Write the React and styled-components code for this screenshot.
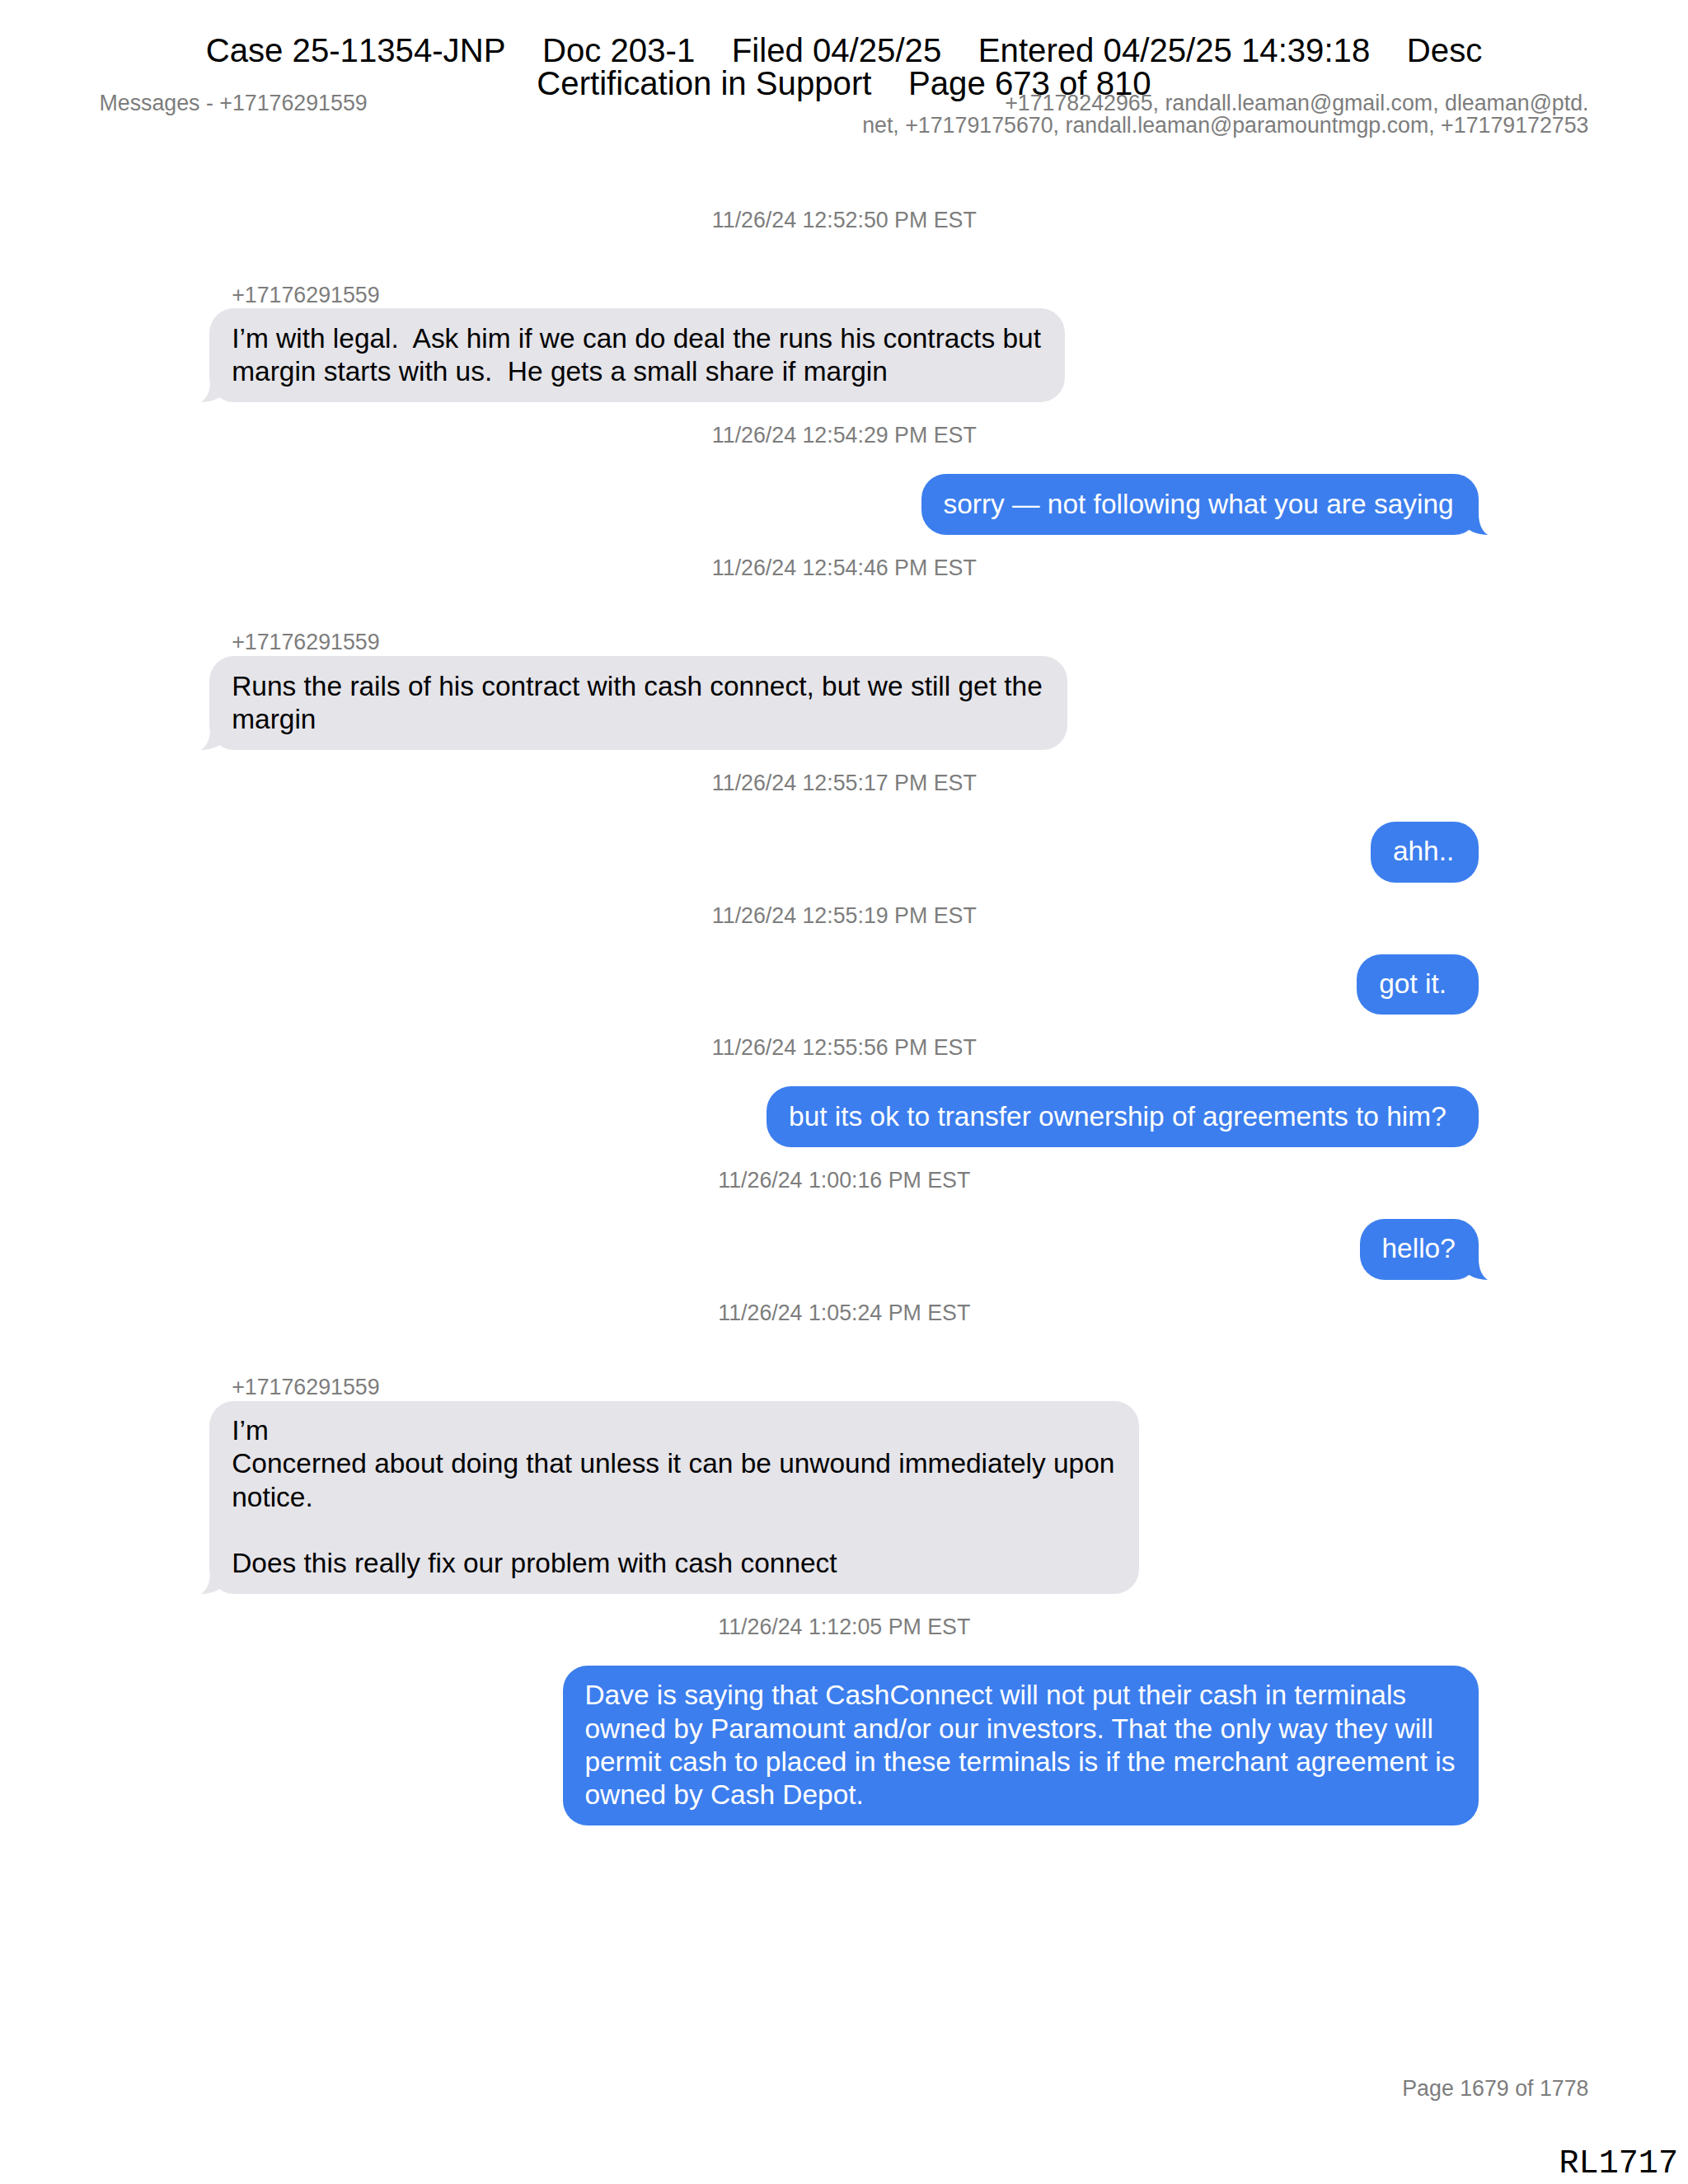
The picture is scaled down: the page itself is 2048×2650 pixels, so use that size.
import React from 'react';
import styled, { createGlobalStyle } from 'styled-components';

/* Pixels per typographic point on a 612pt-wide letter page. */
const PT = 2048 / 612;

const GlobalStyle = createGlobalStyle`
  body {
    margin: 0;
    background: #fff;
    font-family: "Liberation Sans", Arial, sans-serif;
  }
`;

const Page = styled.main`
  box-sizing: border-box;
  position: relative;
  display: flex;
  flex-direction: column;
  width: 2048px;
  height: 2650px;
  padding-top: 112px;
  overflow: hidden;
  background: #fff;

  & > * {
    flex-shrink: 0;
  }
`;

const CourtStamp = styled.div`
  position: absolute;
  z-index: 1;
  top: 42px;
  left: 50%;
  transform: translateX(-50%);
  font-size: 40.15px;
  line-height: 40.15px;
  font-kerning: none;
  text-align: center;
  white-space: pre;
  color: #000;
`;

const RunningHead = styled.header`
  display: flex;
  justify-content: space-between;
  height: 115.2px;
  padding: 0 120.5px;
  font-size: 26.77px;
  line-height: 26.77px;
  color: #7d7d7d;
`;

const Participants = styled.div`
  text-align: right;
  white-space: pre;
`;

const Thread = styled.section`
  display: flex;
  flex-direction: column;
  padding: 0 254.4px;
`;

const Timestamp = styled.time`
  box-sizing: border-box;
  height: 87.02px;
  padding: 27.2px 0 0 0.6px;
  font-size: 26.77px;
  line-height: 26.77px;
  text-align: center;
  color: #7d7d7d;
`;

const Message = styled.article`
  display: flex;
  flex-direction: column;
  align-items: ${(p) => (p.$sent ? 'flex-end' : 'flex-start')};
`;

const Sender = styled.div`
  box-sizing: border-box;
  height: 60.24px;
  padding: 30.4px 0 0 26.8px;
  font-size: 26.77px;
  line-height: 26.77px;
  color: #7d7d7d;
`;

const Bubble = styled.div`
  position: relative;
  box-sizing: border-box;
  width: ${(p) => (p.$points * PT).toFixed(2)}px;
  padding: 16.4px 0 17.1px 26.8px;
  border-radius: 30px;
  font-size: 33.46px;
  line-height: 40.16px;
  white-space: pre;
  background: ${(p) => (p.$sent ? '#3c7eee' : '#e5e4e9')};
  color: ${(p) => (p.$sent ? '#fff' : '#000')};
`;

const TailShape = styled.svg`
  position: absolute;
  bottom: 0;
  ${(p) => (p.$sent ? 'right: -12px; transform: scaleX(-1);' : 'left: -11px;')}
  width: 44px;
  height: 30px;
`;

/* The curl fills the round corner, then a white wedge cuts the notch below it. */
function Tail({ sent }) {
  const fill = sent ? '#3c7eee' : '#e5e4e9';
  return (
    <TailShape $sent={sent} viewBox="0 0 44 30">
      <path d="M12 0 V30 H40 C33 30 28 28 23.4 24 Z" fill={fill} />
      <path d="M12 0 H30 V24 H23.4 C17 28 9 30 1 30 C8 25 12 17 12 4 Z" fill={fill} />
      <path d="M1 30 C9 30 17 28 23.4 24 C28 28 33 30 40 30 Z" fill="#fff" />
    </TailShape>
  );
}

const PageNumber = styled.footer`
  margin-top: 306px;
  padding-right: 120.5px;
  font-size: 26.77px;
  line-height: 26.77px;
  text-align: right;
  color: #7d7d7d;
`;

const BatesNumber = styled.div`
  margin-top: 56px;
  padding-right: 12px;
  font-family: "Liberation Mono", "Courier New", monospace;
  font-size: 40.15px;
  line-height: 44px;
  text-align: right;
  color: #000;
`;

const PHONE = '+17176291559';

const messages = [
  {
    time: '11/26/24 12:52:50 PM EST',
    tail: true,
    points: 310,
    text: 'I’m with legal.  Ask him if we can do deal the runs his contracts but\nmargin starts with us.  He gets a small share if margin',
  },
  {
    time: '11/26/24 12:54:29 PM EST',
    sent: true,
    tail: true,
    points: 202,
    text: 'sorry — not following what you are saying',
  },
  {
    time: '11/26/24 12:54:46 PM EST',
    tail: true,
    points: 311,
    text: 'Runs the rails of his contract with cash connect, but we still get the\nmargin',
  },
  { time: '11/26/24 12:55:17 PM EST', sent: true, points: 39, text: 'ahh..' },
  { time: '11/26/24 12:55:19 PM EST', sent: true, points: 44, text: 'got it.' },
  {
    time: '11/26/24 12:55:56 PM EST',
    sent: true,
    points: 258,
    text: 'but its ok to transfer ownership of agreements to him?',
  },
  { time: '11/26/24 1:00:16 PM EST', sent: true, tail: true, points: 43, text: 'hello?' },
  {
    time: '11/26/24 1:05:24 PM EST',
    tail: true,
    points: 337,
    text: 'I’m\nConcerned about doing that unless it can be unwound immediately upon\nnotice.\n\nDoes this really fix our problem with cash connect',
  },
  {
    time: '11/26/24 1:12:05 PM EST',
    sent: true,
    points: 332,
    text: 'Dave is saying that CashConnect will not put their cash in terminals\nowned by Paramount and/or our investors. That the only way they will\npermit cash to placed in these terminals is if the merchant agreement is\nowned by Cash Depot.',
  },
];

export default function App() {
  return (
    <>
      <GlobalStyle />
      <Page>
        <CourtStamp>
          {'Case 25-11354-JNP    Doc 203-1    Filed 04/25/25    Entered 04/25/25 14:39:18    Desc\nCertification in Support    Page 673 of 810'}
        </CourtStamp>
        <RunningHead>
          <div>Messages - {PHONE}</div>
          <Participants>
            {'+17178242965, randall.leaman@gmail.com, dleaman@ptd.\nnet, +17179175670, randall.leaman@paramountmgp.com, +17179172753'}
          </Participants>
        </RunningHead>
        <Thread>
          {messages.map((m) => (
            <React.Fragment key={m.time}>
              <Timestamp>{m.time}</Timestamp>
              <Message $sent={m.sent}>
                {!m.sent && <Sender>{PHONE}</Sender>}
                <Bubble $sent={m.sent} $points={m.points}>
                  {m.text}
                  {m.tail && <Tail sent={m.sent} />}
                </Bubble>
              </Message>
            </React.Fragment>
          ))}
        </Thread>
        <PageNumber>Page 1679 of 1778</PageNumber>
        <BatesNumber>RL1717</BatesNumber>
      </Page>
    </>
  );
}
